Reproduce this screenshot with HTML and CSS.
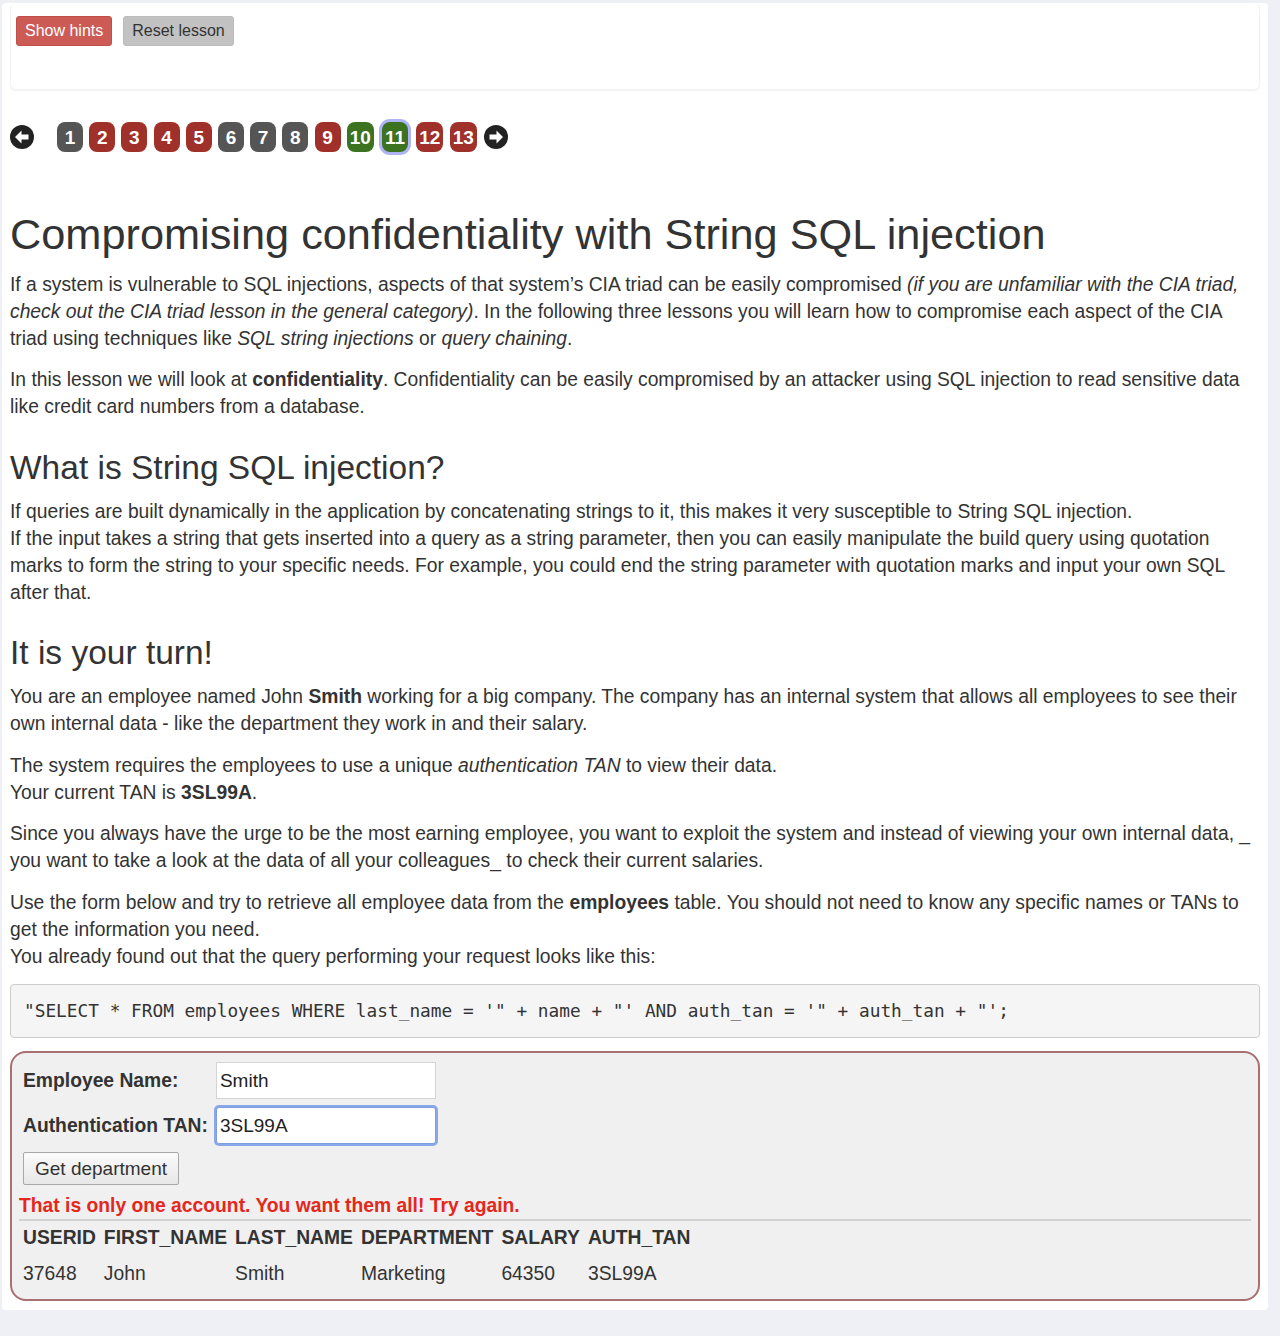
FILE: index.html
```html
<!DOCTYPE html>
<html lang="en">
<head>
<meta charset="utf-8">
<title>SQL Injection (intro)</title>
<link rel="stylesheet" href="styles.css">
</head>
<body>
<div class="panel">
  <div class="hint-card">
    <button class="btn btn-hints">Show hints</button>
    <button class="btn btn-reset">Reset lesson</button>
  </div>

  <div class="lesson-nav">
    <svg class="nav-arrow" viewBox="0 0 24 24" width="24" height="24"><circle cx="12" cy="12" r="12" fill="#222"/><polygon points="5,12 11.5,5.5 11.5,9.5 18.5,9.5 18.5,14.5 11.5,14.5 11.5,18.5" fill="#fff"/></svg>
    <div class="pages">
      <span class="pg gray">1</span>
      <span class="pg red">2</span>
      <span class="pg red">3</span>
      <span class="pg red">4</span>
      <span class="pg red">5</span>
      <span class="pg gray">6</span>
      <span class="pg gray">7</span>
      <span class="pg gray">8</span>
      <span class="pg red">9</span>
      <span class="pg green">10</span>
      <span class="pg green current">11</span>
      <span class="pg red">12</span>
      <span class="pg red">13</span>
    </div>
    <svg class="nav-arrow" viewBox="0 0 24 24" width="24" height="24"><circle cx="12" cy="12" r="12" fill="#222"/><polygon points="19,12 12.5,5.5 12.5,9.5 5.5,9.5 5.5,14.5 12.5,14.5 12.5,18.5" fill="#fff"/></svg>
  </div>

  <h1>Compromising confidentiality with String SQL injection</h1>
  <p>If a system is vulnerable to SQL injections, aspects of that system’s CIA triad can be easily compromised <em>(if you are unfamiliar with the CIA triad, check out the CIA triad lesson in the general category)</em>. In the following three lessons you will learn how to compromise each aspect of the CIA triad using techniques like <em>SQL string injections</em> or <em>query chaining</em>.</p>
  <p>In this lesson we will look at <strong>confidentiality</strong>. Confidentiality can be easily compromised by an attacker using SQL injection to read sensitive data like credit card numbers from a database.</p>

  <h2>What is String SQL injection?</h2>
  <p>If queries are built dynamically in the application by concatenating strings to it, this makes it very susceptible to String SQL injection.<br>If the input takes a string that gets inserted into a query as a string parameter, then you can easily manipulate the build query using quotation marks to form the string to your specific needs. For example, you could end the string parameter with quotation marks and input your own SQL after that.</p>

  <h2 class="turn">It is your turn!</h2>
  <p>You are an employee named John <strong>Smith</strong> working for a big company. The company has an internal system that allows all employees to see their own internal data - like the department they work in and their salary.</p>
  <p>The system requires the employees to use a unique <em>authentication TAN</em> to view their data.<br>Your current TAN is <strong>3SL99A</strong>.</p>
  <p>Since you always have the urge to be the most earning employee, you want to exploit the system and instead of viewing your own internal data, _ you want to take a look at the data of all your colleagues_ to check their current salaries.</p>
  <p>Use the form below and try to retrieve all employee data from the <strong>employees</strong> table. You should not need to know any specific names or TANs to get the information you need.<br>You already found out that the query performing your request looks like this:</p>

  <pre class="code">"SELECT * FROM employees WHERE last_name = '" + name + "' AND auth_tan = '" + auth_tan + "';</pre>

  <div class="attack-box">
    <table class="form-table">
      <tr>
        <td class="lbl">Employee Name:</td>
        <td><input class="field" type="text" value="Smith"></td>
      </tr>
      <tr>
        <td class="lbl">Authentication TAN:</td>
        <td><input class="field focused" type="text" value="3SL99A"></td>
      </tr>
    </table>
    <button class="submit">Get department</button>
    <div class="feedback">That is only one account. You want them all! Try again.</div>
    <div class="results">
      <table class="result-table">
        <tr><th>USERID</th><th>FIRST_NAME</th><th>LAST_NAME</th><th>DEPARTMENT</th><th>SALARY</th><th>AUTH_TAN</th></tr>
        <tr><td>37648</td><td>John</td><td>Smith</td><td>Marketing</td><td>64350</td><td>3SL99A</td></tr>
      </table>
    </div>
  </div>
</div>
</body>
</html>
```

FILE: styles.css
```css
html, body {
  margin: 0;
  padding: 0;
}

body {
  background: #eff0f5;
  font-family: "Liberation Sans", Arial, Helvetica, sans-serif;
  font-size: 19.3px;
  line-height: 27px;
  color: #333;
}

.panel {
  margin: 3px 12px 28px 2px;
  background: #fff;
  border-radius: 4px;
  padding: 0 8px 9px;
}

.hint-card {
  height: 87px;
  box-sizing: border-box;
  padding: 13px 5px 0;
  border-radius: 6px;
  box-shadow: 0 1px 2px rgba(0, 0, 0, 0.06);
  border: 1px solid #f3f3f6;
  border-top: none;
  display: flex;
  align-items: flex-start;
  gap: 11px;
}

.btn {
  font-family: "Liberation Sans", Arial, sans-serif;
  font-size: 16px;
  line-height: 18px;
  height: 30px;
  padding: 5px 8px;
  border-radius: 3px;
  border: 1px solid transparent;
  cursor: pointer;
}

.btn-hints {
  background: #cc5b56;
  border-color: #c24e49;
  color: #fff;
}

.btn-reset {
  background: #c2c2c2;
  border-color: #bbb;
  color: #333;
}

.lesson-nav {
  display: flex;
  align-items: center;
  margin-top: 32px;
  height: 30px;
}

.nav-arrow {
  display: block;
  flex: none;
}

.pages {
  display: flex;
  gap: 6.2px;
  margin: 0 7px 0 23px;
}

.pg {
  display: inline-flex;
  align-items: center;
  justify-content: center;
  min-width: 26px;
  height: 30px;
  box-sizing: border-box;
  padding: 0 3px;
  border-radius: 8px;
  color: #fff;
  font-weight: bold;
  font-size: 19px;
  line-height: 1;
}

.pg.gray { background: #555; }
.pg.red { background: #a0302a; }
.pg.green { background: #3b7321; }
.pg.current {
  box-shadow: 0 0 0 3px #aeb4f4;
  margin: 0 2px;
}

h1 {
  font-size: 43.3px;
  font-weight: 400;
  line-height: 1.1;
  margin: 59px 0 12px;
  color: #333;
}

h2 {
  font-size: 33.5px;
  font-weight: 400;
  line-height: 35px;
  margin: 29.5px 0 13px;
  color: #333;
}

h2.turn {
  margin-top: 29.5px;
  margin-bottom: 13px;
}

p {
  margin: 0 0 14.5px;
}

.code {
  margin: 0 0 13px;
  padding: 12px 13px 13px;
  border: 1px solid #ccc;
  border-radius: 4px;
  background: #f5f5f5;
  font-family: "DejaVu Sans Mono", "Liberation Mono", monospace;
  font-size: 17.8px;
  line-height: 27px;
  color: #333;
  white-space: pre;
  overflow: hidden;
}

.attack-box {
  border: 2px solid #a87070;
  border-radius: 16px;
  background: #f0f0f0;
  padding: 5px 7px 8px;
}

.form-table {
  border-collapse: collapse;
}

.form-table td {
  padding: 4px 4px;
  vertical-align: middle;
}

.lbl {
  font-weight: bold;
  color: #333;
  white-space: nowrap;
}

.field {
  display: block;
  width: 220px;
  height: 37px;
  box-sizing: border-box;
  border: 1px solid #d4d4d4;
  background: #fff;
  padding: 2px 3px;
  font-family: "Liberation Sans", Arial, sans-serif;
  font-size: 19px;
  color: #222;
  border-radius: 0;
  outline: none;
}

.field.focused {
  border: 1px solid #7e9de2;
  border-radius: 3px;
  box-shadow: 0 0 0 2px #8aa7e9;
}

.submit {
  display: block;
  margin: 4px 0 0 4px;
  height: 33px;
  padding: 0 11px;
  font-family: "Liberation Sans", Arial, sans-serif;
  font-size: 19px;
  color: #333;
  background: linear-gradient(#fbfbfb, #e7e7e7);
  border: 1px solid #a8a8a8;
  border-radius: 2px;
}

.feedback {
  margin-top: 6.5px;
  color: #e5271c;
  font-weight: bold;
  line-height: 27px;
}

.results {
  border-top: 2px solid #d2d2d2;
}

.result-table {
  border-collapse: collapse;
}

.result-table th {
  text-align: left;
  font-weight: bold;
  padding: 3.5px 4px 5.5px;
  white-space: nowrap;
}

.result-table td {
  padding: 3.5px 4px 3.5px;
}
```
